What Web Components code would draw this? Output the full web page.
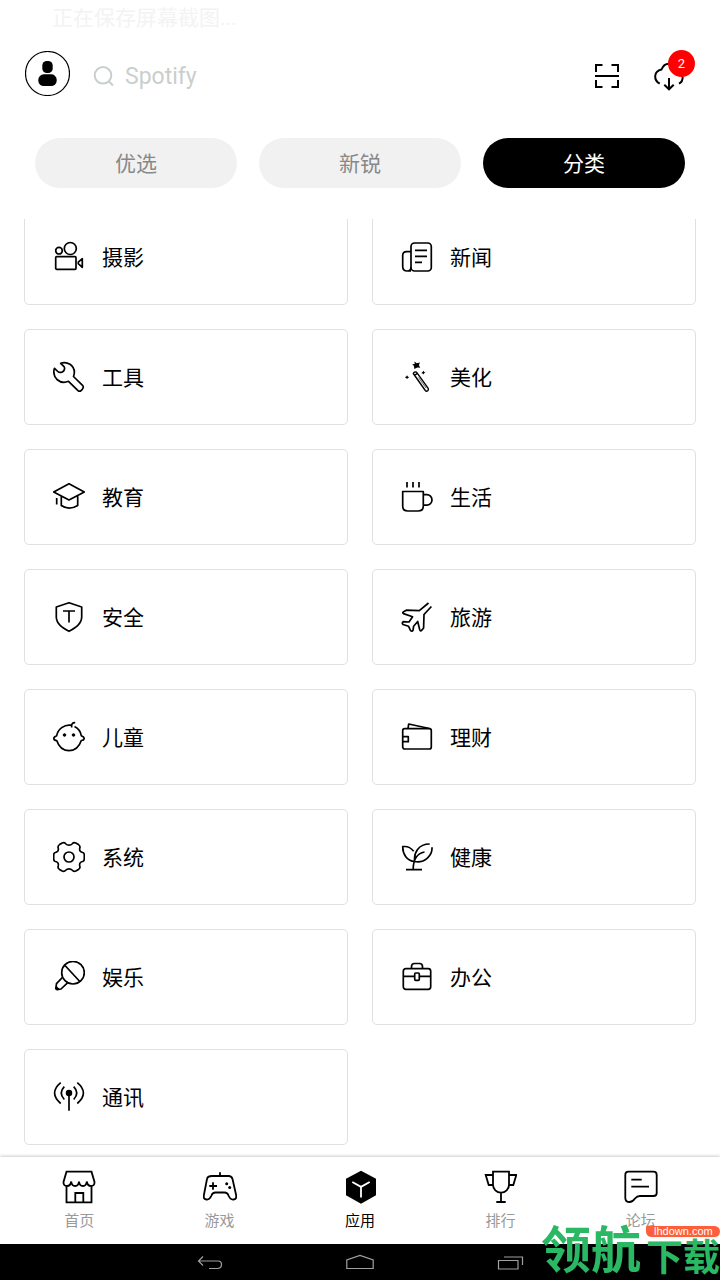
<!DOCTYPE html>
<html lang="zh-CN">
<head>
<meta charset="utf-8">
<meta name="viewport" content="width=device-width, initial-scale=1">
<title>应用分类</title>
<style>
    body {
        margin: 0;
        background: #fff;
        color: #000;
        font-family: Roboto, "Noto Sans CJK SC", sans-serif;
    }
</style>
</head>
<body>
<app-screen>
    <status-bar slot="top">正在保存屏幕截图...</status-bar>
    <app-header slot="top" hint="Spotify" count="2"></app-header>
    <tab-bar slot="top">
        <tab-pill>优选</tab-pill>
        <tab-pill>新锐</tab-pill>
        <tab-pill active>分类</tab-pill>
    </tab-bar>

    <category-card icon="camera">摄影</category-card>
    <category-card icon="news">新闻</category-card>
    <category-card icon="wrench">工具</category-card>
    <category-card icon="wand">美化</category-card>
    <category-card icon="school">教育</category-card>
    <category-card icon="cup">生活</category-card>
    <category-card icon="shield">安全</category-card>
    <category-card icon="plane">旅游</category-card>
    <category-card icon="baby">儿童</category-card>
    <category-card icon="wallet">理财</category-card>
    <category-card icon="gear">系统</category-card>
    <category-card icon="plant">健康</category-card>
    <category-card icon="mic">娱乐</category-card>
    <category-card icon="bag">办公</category-card>
    <category-card icon="antenna">通讯</category-card>

    <bottom-nav slot="bottom">
        <nav-item icon="shop">首页</nav-item>
        <nav-item icon="gamepad">游戏</nav-item>
        <nav-item icon="cube" active>应用</nav-item>
        <nav-item icon="trophy">排行</nav-item>
        <nav-item icon="forum">论坛</nav-item>
    </bottom-nav>
    <system-bar slot="bottom"></system-bar>
    <site-mark slot="bottom" site="lhdown.com"><span slot="big">领航</span>下载</site-mark>
</app-screen>

<script>
// category icons, 32x32
const cardIcons = {
    camera: '<circle cx="6" cy="9.7" r="3.3"/><circle cx="17.3" cy="7.5" r="6"/><rect x="2.7" y="15.7" width="20.3" height="12.6" rx="1"/><path d="M29.3 17.7v8.6l-4-3.6v-1.5z"/>',
    news: '<rect x="10" y="2" width="20.3" height="28" rx="3.5"/><path d="M10 10.7H5.5Q1.7 10.7 1.7 14.5v11q0 4.5 4.5 4.5h3.8M6.5 30Q10 30 10 26M14 9.3h12M14 15.3h12M14 21.3h7"/>',
    wrench: '<path d="M7.7 2.3Q12.5 .5 17 3.3Q23.3 8 20.5 15.5L29.8 24.7Q31 26.3 29.3 28.3L28.3 29.3Q26.6 31 25 29.6L15.5 20.3Q9 23 4 18.5Q-.7 13.5 1.5 7.3L4.8 10.5Q6.3 12 8.8 11.2Q11.5 10.3 11.6 7.5Q11.6 6.2 10.8 5.3z"/>',
    wand: '<path d="M12.3 12.5Q13 10.3 15.5 11.2L27.2 27.3Q27.8 29 26.6 29.9Q25.3 30.7 24.3 29.5zM13.8 14.2l2.8-1.8" stroke-width="1.4"/><path d="M17.5 16.5L25.2 27.2" stroke-width=".6"/><path fill="currentColor" stroke="none" d="M13.4.6L15.8 2.2 18.9 1.4 17.9 4.3 19.2 6.8 16.3 6.4 13.3 8 13 5 11.2 3.2 13.8 3zM6 14.3l.8 1.3 1.5.7-1.5.7L6 18.300l-.7-1.300-1.500-.7 1.500-.7zM22.700 9.700l.5 1.400 1.200.6-1.300.6-.6 1.300-.8-1.100-1.400-.3 1-.9z"/>',
    school: '<path d="M16 2.7L31.3 11 16 19 .7 11zM8.3 15.3v9.2Q16 29.8 24.7 24.5v-9.2M3.7 17v6.5"/>',
    cup: '<path d="M1.700 10.500h20.600v14.500q0 5-5 5H6.700q-5 0-5-5zM22.300 13.700h3.500a5.200 5.200 0 0 1 0 10.400h-3.500M6 1v5.500M12 1v5.500M18 1v5.500"/>',
    shield: '<path d="M16 1.7L28.7 6v10C28.7 23 22 27 16 30.3 10 27 3.3 23 3.3 16V6zM10 10h12M16 10v11.5"/>',
    plane: '<path d="M27.5 2L18.3 9.7 5.3 9.2 2.2 11Q1.2 12 2.5 12.6L11.6 15.7 8 21 2.2 20.7Q.5 22 2 23.5L7.5 25.2 9.5 29.5Q11 31 12 29.3L12.6 25.3 16.7 20.5 18.8 29Q19.5 30.5 20.8 29.2L22.6 27 23 13.5 30.4 5.5"/>',
    baby: '<path d="M18 4.2A12.8 12.8 0 0 0 3.7 14.7Q.7 15.8 .8 17.5Q1 19.3 3.7 19.5C8.2 33 23.8 33 28.3 19.5Q31 19.3 31.2 17.5Q31.2 15.8 28.3 14.7A12.5 12.5 0 0 0 21.5 5.5M22.2 1.7Q18 1.5 18.7 6.5"/><circle cx="11.5" cy="14" r="1.3" fill="currentColor" stroke-width="1"/><circle cx="20.5" cy="14" r="1.3" fill="currentColor" stroke-width="1"/>',
    wallet: '<rect x="1.7" y="7.7" width="28.6" height="20.3" rx="2"/><path d="M7 7.7L7.7 3 28.5 7.5M1.7 15.7h5.6v5H1.7"/>',
    gear: '<path d="M16 4.2Q18 4.2 19.3 2.7Q20.7 1 22.8 2L25.5 3.6Q27.5 5 26.8 7Q26.3 9.2 27.3 10.3Q28.2 11.3 29.7 11.5Q31.3 12 31.3 14V18Q31.3 20 29.7 20.5Q28.2 20.7 27.3 21.7Q26.3 22.8 26.8 25Q27.5 27 25.5 28.4L22.8 30Q20.7 31 19.3 29.3Q18 27.8 16 27.8Q14 27.8 12.7 29.3Q11.3 31 9.2 30L6.5 28.4Q4.5 27 5.2 25Q5.7 22.8 4.7 21.7Q3.8 20.7 2.3 20.5Q.7 20 .7 18V14Q.7 12 2.3 11.5Q3.8 11.3 4.7 10.3Q5.7 9.2 5.2 7Q4.5 5 6.5 3.6L9.2 2Q11.3 1 12.7 2.7Q14 4.2 16 4.2z"/><circle cx="16" cy="16" r="5"/>',
    plant: '<path d="M5 28.7h16M12.2 28.5C12.2 22 13.5 13 23.5 11M28.7 3C17.5 3 12.5 11.5 13.7 20.7M31 6.3C31.5 14 24 22.5 13.7 20.5C5.5 20 1.7 12.5 1.7 5.7Q8 4.5 12.7 10.3"/>',
    mic: '<circle cx="20" cy="11.7" r="11.3"/><path d="M12 4.5L26.8 20.5M9.3 16.5L3.5 22.7 2.8 27.3Q3 28.5 4.3 28.7L8 28 14.5 21.8M3 25.5L5.5 28.3"/>',
    bag: '<rect x="2.3" y="7.7" width="27.4" height="20.6" rx="2.5"/><path d="M10.5 7.7V5.5q0-3 3-3h5q3 0 3 3v2.2M2.3 15.3h11.5M18.3 15.3h11.4"/><rect x="13.7" y="12" width="4.6" height="7.3" rx="1"/>',
    antenna: '<circle cx="16" cy="12" r="2.4" fill="currentColor"/><path d="M16 12v17.7M11.3 5.7Q5.2 12 11.3 18.5M20.7 5.7Q26.8 12 20.7 18.5M7.7 1.7Q-4.5 12 7.7 22.5M24.3 1.7Q36.5 12 24.3 22.5"/>'
};

// bottom navigation icons, 34x34
const navIcons = {
    shop: '<path d="M4.5 1.7h25L32.5 12Q32.7 16 29 16Q25.5 16 24.8 11.5Q24.3 16 20.9 16Q17.5 16 17 11.5Q16.5 16 13.1 16Q9.7 16 9.2 11.5Q8.5 16 5 16Q1.3 16 1.5 12zM4.5 16v16.3h25V16M13.3 32.3V23h8v9.3"/>',
    gamepad: '<path d="M17 2.3V6M9 6H25.5Q28.7 6 29.5 9L33 24.5Q34 29.5 30.5 29.5Q27.5 30 25.5 25.5Q24.5 22.5 21.5 22.5H12.5Q9.5 22.5 8.5 25.5Q6.5 30 3.5 29.5Q0 29.5 1 24.5L4 9Q4.5 6 9 6zM6.3 16H14M10 12.2V19.8"/><circle cx="23.7" cy="13.7" r="1.5" fill="currentColor" stroke="none"/><circle cx="26.7" cy="17.5" r="1.5" fill="currentColor" stroke="none"/>',
    cube: '<path fill="currentColor" stroke="none" d="M18 .7L33 8.7V25.3L18 33.7 3 25.3V8.7z"/><path stroke="#fff" d="M9.3 12L18 16.9 26.7 12M18 16.9V27.5"/>',
    trophy: '<path d="M10 1.7H26V14.7A8 8 0 0 1 10 14.7zM10 5H2.7L5.7 15H10M26 5H33.3L30.3 15H26M18 22.7V32M13.3 32H22.7"/>',
    forum: '<path d="M4.5 1.7H29.5Q32.7 1.7 32.7 5V23Q32.7 26 29.5 26H16Q13 26 11 28.5Q8.5 32 5.5 32Q1.3 32 1.3 28V5Q1.3 1.7 4.5 1.7zM7.3 9.7H17.7M7.3 16.7H25"/>'
};

function attach(el, html) {
    el.attachShadow({ mode: 'open' }).innerHTML = html;
}

class AppScreen extends HTMLElement {
    constructor() {
        super();
        attach(this, `
            <style>
            :host {
                display: flex;
                flex-direction: column;
                height: 100vh;
                position: relative;
                overflow: hidden;
            }
            main {
                flex: 1;
                min-height: 0;
                overflow: hidden;
                display: flex;
                flex-direction: column;
                justify-content: flex-end;
                margin-top: 31px;
                padding: 0 24px 12px;
            }
            .grid {
                display: grid;
                grid-template-columns: 1fr 1fr;
                gap: 24px;
            }
            </style>
            <slot name="top"></slot>
            <main><div class="grid"><slot></slot></div></main>
            <slot name="bottom"></slot>
        `);
    }
}

class StatusBar extends HTMLElement {
    constructor() {
        super();
        attach(this, `
            <style>
            :host {
                display: block;
                padding-left: 52px;
                height: 36px;
                line-height: 36px;
                font-size: 21px;
                color: #f3f3f3;
            }
            </style>
            <slot></slot>
        `);
    }
}

class AppHeader extends HTMLElement {
    connectedCallback() {
        attach(this, `
            <style>
            :host {
                display: flex;
                align-items: flex-start;
                padding: 15px 34px 0 25px;
                height: 87px;
            }
            button {
                border: 0;
                padding: 0;
                background: none;
                color: inherit;
                display: flex;
                position: relative;
            }
            svg {display: block; fill: none; stroke: currentColor; stroke-width: 2}
            .search {
                flex: 1;
                min-width: 0;
                height: 50px;
                margin-left: 22px;
                display: flex;
                align-items: center;
                gap: 8px;
                color: #c9cfcd;
            }
            input {
                flex: 1;
                min-width: 0;
                border: 0;
                padding: 2px 0 0;
                outline: 0;
                background: none;
                color: #000;
                font: 23px/32px Roboto, "Noto Sans CJK SC", sans-serif;
            }
            input::placeholder {color: #c9cfcd; opacity: 1}
            .actions {
                height: 50px;
                display: flex;
                align-items: center;
                gap: 31px;
            }
            .badge {
                position: absolute;
                right: -9px;
                top: -9px;
                width: 27px;
                height: 27px;
                border-radius: 50%;
                background: #f00;
                color: #fff;
                font: 13px/27px Roboto, sans-serif;
                text-align: center;
            }
            </style>
            <button type="button" aria-label="我的">
                <svg width="45" height="45" viewBox="0 0 45 45">
                    <circle cx="22.5" cy="22.5" r="22" stroke-width="1.2"/>
                    <g fill="currentColor" stroke="none">
                        <rect x="17.3" y="10" width="10.4" height="12" rx="4.5"/>
                        <rect x="13.3" y="23.3" width="18.4" height="11.7" rx="5.5"/>
                    </g>
                </svg>
            </button>
            <label class="search">
                <svg width="25" height="25" viewBox="0 0 25 25">
                    <circle cx="11" cy="11.3" r="8.3"/><path d="M17 17.5L21 21.5"/>
                </svg>
                <input type="text" aria-label="搜索" placeholder="${this.getAttribute('hint')}">
            </label>
            <div class="actions">
                <button type="button" aria-label="扫一扫">
                    <svg width="28" height="28" viewBox="0 0 28 28">
                        <path d="M3 10V3H9.5M18.500 3H25V10M25 18V25H18.500M9.500 25H3V18M2 14H26"/>
                    </svg>
                </button>
                <button type="button" aria-label="下载">
                    <svg width="34" height="34" viewBox="0 0 34 34">
                        <path d="M7.7 24.7C1.5 21 1.3 12.5 9.5 10.500C11 6.500 13.500 4.700 17 4.700C23 4.700 25.500 8 26 11C32 14 32 22 27 24.700M17 19V30M12.300 25.700L17 30.300L21.700 25.700"/>
                    </svg>
                    <span class="badge">${this.getAttribute('count')}</span>
                </button>
            </div>
        `);
    }
}

class TabBar extends HTMLElement {
    constructor() {
        super();
        attach(this, `
            <style>
            :host {display: flex; gap: 22px; padding: 0 35px}
            </style>
            <slot></slot>
        `);
    }
}

class TabPill extends HTMLElement {
    constructor() {
        super();
        attach(this, `
            <style>
            :host {display: block; flex: 1}
            button {
                width: 100%;
                height: 50px;
                border: 0;
                border-radius: 25px;
                padding: 0 0 3px;
                background: #f1f1f1;
                color: #888;
                font-family: inherit;
                font-size: 21px;
            }
            :host([active]) button {background: #000; color: #fff}
            </style>
            <button type="button"><slot></slot></button>
        `);
    }
}

class CategoryCard extends HTMLElement {
    connectedCallback() {
        attach(this, `
            <style>
            :host {display: block}
            a {
                display: flex;
                align-items: center;
                gap: 17px;
                box-sizing: border-box;
                height: 96px;
                padding: 0 28px;
                border: 1px solid #dfdfe4;
                border-radius: 5px;
                color: #000;
                font-size: 21px;
                text-decoration: none;
            }
            span {padding-bottom: 3px}
            svg {
                flex: none;
                fill: none;
                stroke: currentColor;
                stroke-width: 1.7;
                stroke-linejoin: round;
            }
            </style>
            <a href="#"><svg width="32" height="32" viewBox="0 0 32 32">${cardIcons[this.getAttribute('icon')]}</svg><span><slot></slot></span></a>
        `);
    }
}

class BottomNav extends HTMLElement {
    constructor() {
        super();
        attach(this, `
            <style>
            :host {
                display: block;
                position: relative;
                background: #fff;
                box-shadow: 0 -1px 3px rgba(0,0,0,0.2);
            }
            nav {display: flex; padding: 13px 9px}
            </style>
            <nav><slot></slot></nav>
        `);
    }
}

class NavItem extends HTMLElement {
    connectedCallback() {
        attach(this, `
            <style>
            :host {display: block; flex: 1}
            a {
                display: flex;
                flex-direction: column;
                align-items: center;
                gap: 7px;
                color: #999;
                font-size: 15px;
                line-height: 20px;
                text-decoration: none;
            }
            :host([active]) a {color: #000}
            svg {fill: none; color: #000; stroke: currentColor; stroke-width: 1.8}
            </style>
            <a href="#"><svg width="34" height="34" viewBox="0 0 34 34">${navIcons[this.getAttribute('icon')]}</svg><span><slot></slot></span></a>
        `);
    }
}

class SystemBar extends HTMLElement {
    constructor() {
        super();
        attach(this, `
            <style>
            :host {
                display: flex;
                justify-content: center;
                align-items: center;
                gap: 122px;
                height: 36px;
                position: relative;
                background: #000;
            }
            button {border: 0; padding: 0; background: none; color: #a0a0a0}
            svg {display: block; fill: none; stroke: currentColor; stroke-width: 1.2}
            </style>
            <button type="button" aria-label="返回">
                <svg width="28" height="20" viewBox="0 0 28 20"><path d="M7 4.5L2.5 9 7 13.5M2.5 9H22Q25.5 9 25.5 12.5T22 16.5H13"/></svg>
            </button>
            <button type="button" aria-label="主页">
                <svg width="28" height="20" viewBox="0 0 28 20"><path d="M.8 16.5V8L14 3.500 27.200 8V16.500z"/></svg>
            </button>
            <button type="button" aria-label="最近">
                <svg width="28" height="20" viewBox="0 0 28 20"><path d="M2.5 8.5H22V17H2.5zM8 5H26.5V13"/></svg>
            </button>
        `);
    }
}

// site mark lies over the lower right corner
class SiteMark extends HTMLElement {
    connectedCallback() {
        attach(this, `
            <style>
            :host {
                display: flex;
                align-items: flex-end;
                gap: 5px;
                position: absolute;
                right: 0;
                bottom: 0;
                color: #2ab865;
                font-weight: 700;
                white-space: nowrap;
                pointer-events: none;
            }
            .big {font-size: 50px; line-height: 58px}
            .rest {display: flex; flex-direction: column}
            .site {
                padding: 0 0 0 8px;
                border-radius: 2px 8px 8px 8px;
                background: #fd5f3b;
                color: #fff;
                font: 11px/11px "Liberation Sans", sans-serif;
            }
            .small {font-size: 37px; line-height: 43px}
            </style>
            <span class="big"><slot name="big"></slot></span>
            <span class="rest">
                <span class="site">${this.getAttribute('site')}</span>
                <span class="small"><slot></slot></span>
            </span>
        `);
    }
}

customElements.define('app-screen', AppScreen);
customElements.define('status-bar', StatusBar);
customElements.define('app-header', AppHeader);
customElements.define('tab-bar', TabBar);
customElements.define('tab-pill', TabPill);
customElements.define('category-card', CategoryCard);
customElements.define('bottom-nav', BottomNav);
customElements.define('nav-item', NavItem);
customElements.define('system-bar', SystemBar);
customElements.define('site-mark', SiteMark);
</script>
</body>
</html>
